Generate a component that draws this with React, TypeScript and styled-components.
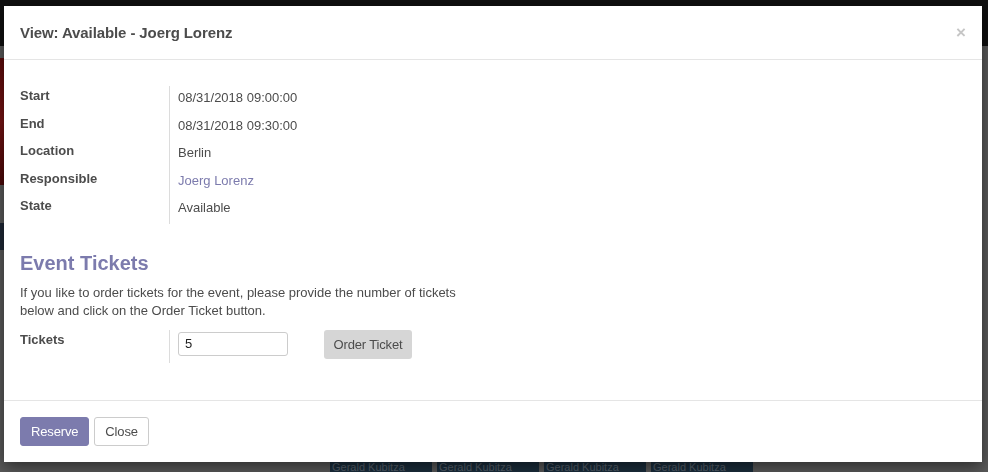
import React from "react";
import styled, { createGlobalStyle } from "styled-components";

const Global = createGlobalStyle`
  html, body { margin: 0; padding: 0; }
  body {
    font-family: "Liberation Sans", Arial, sans-serif;
    font-size: 13px;
    color: #4c4c4c;
    background: #5a5a5a;
    overflow: hidden;
  }
  * { box-sizing: border-box; }
`;

const Page = styled.div`
  width: 988px;
  height: 472px;
  display: flex;
  flex-direction: column;
  background: #5a5a5a;
  overflow: hidden;
`;

const Navbar = styled.div`
  height: 46px;
  flex: none;
  background: #101010;
`;

const Main = styled.div`
  flex: 1;
  display: flex;
  flex-direction: column;
  justify-content: space-between;
`;

const SideArt = styled.div`
  display: flex;
  flex-direction: column;
  width: 90px;
`;

const RedImage = styled.div`
  margin-top: 12px;
  height: 127px;
  background: linear-gradient(180deg, #5e0b0b 0%, #781414 50%, #4a0808 100%);
`;

const NavyBlock = styled.div`
  margin-top: 38px;
  height: 27px;
  background: #1f2836;
`;

const CalendarRow = styled.div`
  display: flex;
  gap: 5px;
  padding-left: 330px;
  height: 10px;
  overflow: hidden;
`;

const CalCell = styled.div`
  width: 102px;
  height: 10px;
  background: #1b2e3d;
  color: #56616c;
  font-size: 11px;
  line-height: 10px;
  padding-left: 2px;
  white-space: nowrap;
`;

const Modal = styled.div`
  position: fixed;
  left: 4px;
  top: 6px;
  width: 978px;
  height: 456px;
  background: #ffffff;
  display: flex;
  flex-direction: column;
  box-shadow: 0 5px 15px rgba(0, 0, 0, 0.5);
`;

const Header = styled.div`
  height: 54px;
  flex: none;
  display: flex;
  align-items: center;
  justify-content: space-between;
  padding: 0 16px 0 16px;
  border-bottom: 1px solid #e5e5e5;
`;

const Title = styled.h4`
  margin: 0;
  font-size: 15px;
  font-weight: bold;
  color: #4c4c4c;
  letter-spacing: -0.1px;
`;

const CloseX = styled.span`
  font-size: 17px;
  font-weight: bold;
  color: #c6c6c6;
  line-height: 1;
`;

const Body = styled.div`
  flex: 1;
  padding: 26px 16px 0;
  display: flex;
  flex-direction: column;
`;

const FieldGrid = styled.div`
  display: grid;
  grid-template-columns: 149px 1fr;
  grid-auto-rows: 27.6px;
`;

const Label = styled.div`
  font-weight: bold;
  line-height: 19.5px;
  color: #4c4c4c;
`;

const Value = styled.div<{ $link?: boolean }>`
  border-left: 1px solid #dcdcdc;
  padding: 2px 0 0 8px;
  line-height: 19.5px;
  color: ${(p) => (p.$link ? "#7c7bad" : "#4c4c4c")};
`;

const SectionTitle = styled.h3`
  margin: 28px 0 10px;
  font-size: 20px;
  line-height: 22px;
  font-weight: bold;
  color: #7c7bad;
`;

const Paragraph = styled.p`
  margin: 0 0 10px;
  line-height: 18px;
  max-width: 460px;
`;

const TicketRow = styled.div`
  display: grid;
  grid-template-columns: 149px 1fr;
  height: 33px;
`;

const TicketValue = styled.div`
  border-left: 1px solid #dcdcdc;
  padding-left: 8px;
  display: flex;
  align-items: flex-start;
  gap: 36px;
`;

const NumberInput = styled.input`
  margin-top: 2px;
  width: 110px;
  height: 24px;
  border: 1px solid #cccccc;
  border-radius: 3px;
  padding: 0 6px;
  font-family: "Liberation Sans", Arial, sans-serif;
  font-size: 13px;
  color: #222;
  outline: none;
`;

const GreyButton = styled.button`
  height: 29px;
  width: 88px;
  padding: 0;
  border: none;
  border-radius: 3px;
  background: #d6d6d6;
  color: #4c4c4c;
  font-family: "Liberation Sans", Arial, sans-serif;
  font-size: 13px;
  letter-spacing: -0.15px;
`;

const Footer = styled.div`
  flex: none;
  border-top: 1px solid #e5e5e5;
  padding: 16px;
  display: flex;
  gap: 5px;
`;

const FooterButton = styled.button<{ $primary?: boolean }>`
  height: 29px;
  padding: 0 10px;
  border-radius: 3px;
  font-family: "Liberation Sans", Arial, sans-serif;
  font-size: 13px;
  letter-spacing: -0.15px;
  border: 1px solid ${(p) => (p.$primary ? "#7c7bad" : "#cccccc")};
  background: ${(p) => (p.$primary ? "#7c7bad" : "#ffffff")};
  color: ${(p) => (p.$primary ? "#ffffff" : "#4c4c4c")};
`;

const fields: { label: string; value: string; link?: boolean }[] = [
  { label: "Start", value: "08/31/2018 09:00:00" },
  { label: "End", value: "08/31/2018 09:30:00" },
  { label: "Location", value: "Berlin" },
  { label: "Responsible", value: "Joerg Lorenz", link: true },
  { label: "State", value: "Available" },
];

export default function App() {
  return (
    <>
      <Global />
      <Page>
        <Navbar />
        <Main>
          <SideArt>
            <RedImage />
            <NavyBlock />
          </SideArt>
          <CalendarRow>
            {[0, 1, 2, 3].map((i) => (
              <CalCell key={i}>Gerald Kubitza</CalCell>
            ))}
          </CalendarRow>
        </Main>
      </Page>
      <Modal>
        <Header>
          <Title>View: Available - Joerg Lorenz</Title>
          <CloseX>×</CloseX>
        </Header>
        <Body>
          <FieldGrid>
            {fields.map((f) => (
              <React.Fragment key={f.label}>
                <Label>{f.label}</Label>
                <Value $link={f.link}>{f.value}</Value>
              </React.Fragment>
            ))}
          </FieldGrid>
          <SectionTitle>Event Tickets</SectionTitle>
          <Paragraph>
            If you like to order tickets for the event, please provide the number of tickets
            below and click on the Order Ticket button.
          </Paragraph>
          <TicketRow>
            <Label>Tickets</Label>
            <TicketValue>
              <NumberInput defaultValue="5" />
              <GreyButton>Order Ticket</GreyButton>
            </TicketValue>
          </TicketRow>
        </Body>
        <Footer>
          <FooterButton $primary>Reserve</FooterButton>
          <FooterButton>Close</FooterButton>
        </Footer>
      </Modal>
    </>
  );
}
